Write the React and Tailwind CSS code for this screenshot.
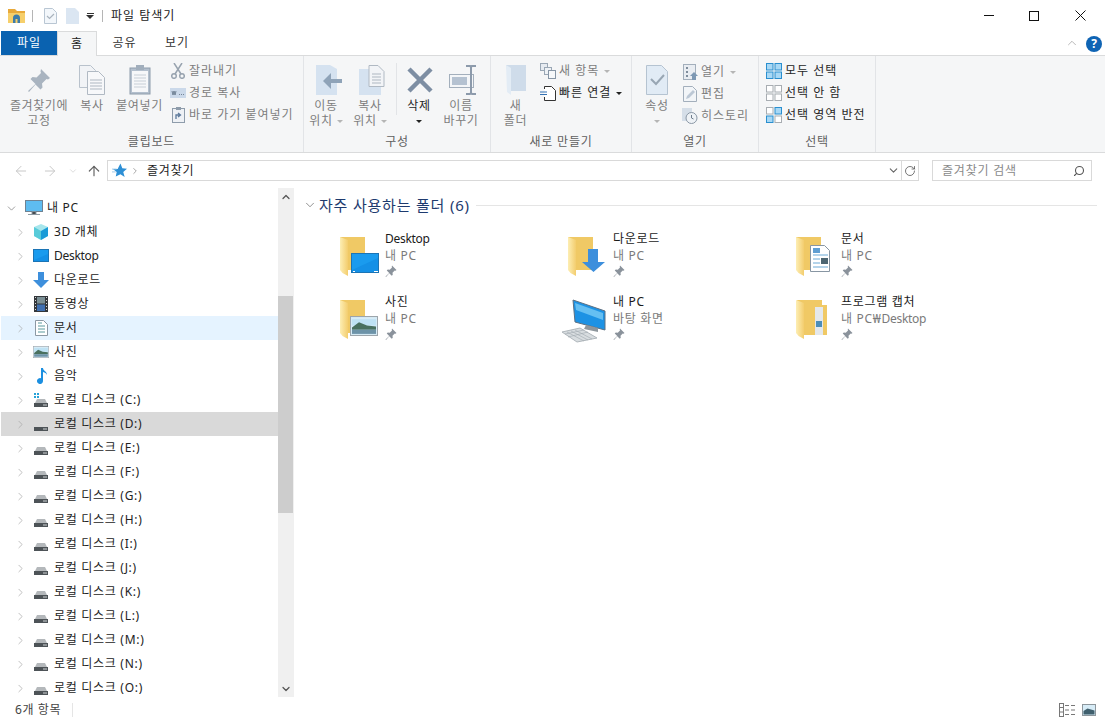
import React from 'react';
import { ArrowLeft, ArrowRight, ArrowUp, ChevronDown, ChevronRight, ChevronUp, RotateCw, Search } from 'lucide-react';

const Pin = ({ size = 12, color = '#8a929b' }) => (
  <svg width={size} height={size} viewBox="0 0 24 24">
    <path d="M14 1l9 9-2 1.500-1.500-.5-4.500 4.500.5 4-2 2-5-5-6.500 7.500L1 23l7.500-7-5-5 2-2 4 .5L14 5l-.5-1.500z" fill={color} />
  </svg>
);

// Desktop runs narrower than the hangul around it
const Txt = ({ children }) =>
  children.split(/(Desktop)/).map((part, i) =>
    part === 'Desktop' ? <span key={i} className="tracking-[-.3px]">{part}</span> : part
  );

const Caret = ({ dark, className = '' }) => (
  <span className={`inline-block h-0 w-0 border-x-[3px] border-t-[3px] border-x-transparent align-middle ${dark ? 'border-t-[#222]' : 'border-t-[#b5b5b5]'} ${className}`} />
);

const FolderShape = ({ children, tall }) => (
  <svg width="50" height="48" viewBox="0 0 50 48" className="shrink-0 overflow-visible">
    <defs>
      <linearGradient id="fold" x1="0" y1="0" x2="1" y2="0">
        <stop offset="0" stopColor="#fdeeb4" />
        <stop offset="1" stopColor="#f3cd6e" />
      </linearGradient>
    </defs>
    {tall ? <path d="M5 5h25v5h5v30H12z" fill="#f0c965" /> : <path d="M4 5h25v33H10z" fill="#f0c965" />}
    <path d="M4 5l8 3v36l-5.500-3L4 38z" fill="url(#fold)" />
    {children}
  </svg>
);

const DesktopOverlay = () => (
  <g>
    <rect x="15.500" y="21.500" width="27" height="19" fill="#1a9bee" stroke="#1b74b5" />
    <path d="M16 38l26-12v14H16z" fill="#1490e6" />
    <path d="M17 39.500h2M38 39.500h4" stroke="#fff" strokeWidth="1" />
  </g>
);

const DownloadOverlay = () => <path d="M24 17h10v13h7L29.500 40 18 30h6z" fill="#3d8fdc" />;

const DocOverlay = () => (
  <g>
    <path d="M18.500 13.500h14l5 5v21h-19z" fill="#fff" stroke="#8896a3" />
    <path d="M21 16h7v5h-7z" fill="#5f9ed2" />
    <path d="M21 23h15M21 27h7M21 31h7M21 35h15" stroke="#6aa9d6" />
    <path d="M29 26h7v6h-7z" fill="#4d6672" />
  </g>
);

const PhotoOverlay = ({ x = 14, y = 21, w = 28, h = 20 }) => (
  <svg x={x} y={y} width={w} height={h} viewBox="0 0 28 19" preserveAspectRatio="none">
    <rect x=".5" y=".5" width="27" height="18" fill="#d7ecf7" stroke="#9da5ab" />
    <path d="M2 3h24v6H2z" fill="#bfe2f4" />
    <path d="M2 11l7-5 8 3 9 1v3H2z" fill="#49705f" />
    <path d="M2 13h24v4H2z" fill="#6d93a8" />
  </svg>
);

const MyPcLarge = () => (
  <svg width="50" height="48" viewBox="0 0 50 48" className="shrink-0 overflow-visible">
    <path d="M9 5l32 11v19L11 27z" fill="#1d92e4" stroke="#5d7082" />
    <path d="M11 8l28 10v7L12 15z" fill="#65bff2" />
    <path d="M22 30l12 3v4l-14-3z" fill="#8f979d" />
    <path d="M-2 37l18-4 17 10-20 4z" fill="#d8dde0" stroke="#b0b7bc" />
    <path d="M3 37l17 9M7 36l17 9M11 35l17 9M1 39l19-4M4 42l20-5" stroke="#a0a8ae" strokeWidth=".6" />
  </svg>
);

const Drive = ({ win, dim }) => (
  <svg width="16" height="16" viewBox="0 0 16 16">
    {win && (
      <g fill="#27a2d8">
        <rect x="1" y="1" width="2" height="2" />
        <rect x="4" y="1" width="2" height="2" />
        <rect x="1" y="4" width="2" height="2" />
        <rect x="4" y="4" width="2" height="2" />
      </g>
    )}
    <path d="M2 11l2-4h8l2 4z" fill={dim ? '#d9d9d9' : '#b4b8bb'} />
    <rect x="1" y="11" width="14" height="4" fill="#4d5357" />
    <path d="M10 13h4" stroke="#cfd3d5" />
  </svg>
);

const navIcons = {
  pc: (
    <svg width="18" height="16" viewBox="0 0 18 16">
      <rect x=".5" y=".5" width="17" height="11" fill="#5ebcf0" stroke="#6f8292" />
      <path d="M7 12h4v2H7zM3 14.500h12" stroke="#8e9aa3" />
    </svg>
  ),
  cube: (
    <svg width="16" height="16" viewBox="0 0 16 16">
      <path d="M8 0l7 3v9l-7 4-7-4V3z" fill="#a7e6ec" />
      <path d="M8 7l7-4v9l-7 4z" fill="#1a9bd7" />
      <path d="M8 7L1 3v9l7 4z" fill="#58cbd9" />
    </svg>
  ),
  desktop: (
    <svg width="16" height="16" viewBox="0 0 16 16">
      <rect x=".5" y="1.500" width="15" height="12" fill="#1a9bee" stroke="#1b74b5" />
      <path d="M1 12l14-6v7H1z" fill="#1490e6" />
    </svg>
  ),
  down: (
    <svg width="16" height="16" viewBox="0 0 16 16">
      <path d="M5 0h6v8h5l-8 8-8-8h5z" fill="#3d8fdc" />
    </svg>
  ),
  video: (
    <svg width="14" height="16" viewBox="0 0 14 16">
      <rect width="14" height="16" fill="#33373b" />
      <rect x="3" y="1" width="8" height="6.500" fill="#7a8f95" />
      <rect x="3" y="8.500" width="8" height="6.500" fill="#3f6fb0" />
      <path d="M1 1.500h1M1 4.500h1M1 7.500h1M1 10.500h1M1 13.500h1M12 1.500h1M12 4.500h1M12 7.500h1M12 10.500h1M12 13.500h1" stroke="#d7d7d7" />
    </svg>
  ),
  doc: (
    <svg width="13" height="16" viewBox="0 0 13 16">
      <path d="M.5.500h8l4 4v11H.5z" fill="#fff" stroke="#8c98a3" />
      <path d="M3 3h4M3 6h7M3 9h7M3 12h7" stroke="#5a9a9e" />
    </svg>
  ),
  photo: (
    <svg width="16" height="12" viewBox="0 0 28 19" preserveAspectRatio="none">
      <PhotoOverlay x={0} y={0} w={28} h={19} />
    </svg>
  ),
  music: (
    <svg width="16" height="16" viewBox="0 0 16 16">
      <path d="M8 0h2c0 3 4 3 4 7-1-2-2-2.500-4-3v9a3 3 0 1 1-2-2.800z" fill="#1b8fe0" />
    </svg>
  ),
};

const drives = ['D', 'E', 'F', 'G', 'H', 'I', 'J', 'K', 'L', 'M', 'N', 'O'];

const NavRow = ({ icon, label, active, hover, top }) => (
  <div className={`flex h-6 w-[277px] items-center ${active ? 'bg-[#d9d9d9]' : hover ? 'bg-[#e5f3ff]' : ''}`}>
    {top ? (
      <ChevronDown size={13} strokeWidth={1.300} className="ml-[4px] text-[#777]" />
    ) : (
      <ChevronRight size={13} strokeWidth={1.300} className="ml-[13px] text-[#a6a6a6]" />
    )}
    <div className={`flex h-4 items-center justify-center ${top ? 'ml-[7px] w-[18px]' : 'ml-[6px] w-4'}`}>{icon}</div>
    <span className={`${top ? 'ml-[4px]' : 'ml-[5px]'} text-[12px] tracking-[.7px] text-[#222]`}><Txt>{label}</Txt></span>
  </div>
);

const Large = ({ w, icon, lines, drop, dark }) => (
  <div className={`flex shrink-0 flex-col items-center ${w}`}>
    <div className="flex h-[37px] items-center justify-center">{icon}</div>
    {lines.map((l, i) => (
      <div key={i} className={`h-[15px] whitespace-nowrap text-[12px] leading-[15px] tracking-[.6px] ${dark ? 'text-[#262626]' : 'text-[#7d7d7d]'}`}>
        {l}
        {drop && lines.length > 1 && i === lines.length - 1 && <Caret className="ml-[4px]" />}
      </div>
    ))}
    {drop && lines.length === 1 && (
      <div className="mt-[5px] flex h-[6px] items-center"><Caret dark={dark} /></div>
    )}
  </div>
);

const Small = ({ icon, label, dark, caret }) => (
  <div className="flex h-[22px] items-center whitespace-nowrap">
    <div className="flex h-4 w-4 items-center justify-center">{icon}</div>
    <span className={`ml-[3px] text-[12px] tracking-[1px] ${dark ? 'text-[#262626]' : 'text-[#7d7d7d]'}`}>{label}</span>
    {caret && <Caret dark={dark} className="ml-[5px]" />}
  </div>
);

const Group = ({ w, label, children }) => (
  <div className={`flex h-[96px] shrink-0 flex-col border-r border-[#e2e4e7] ${w}`}>
    <div className="flex h-[78px] pt-[5px]">{children}</div>
    <div className="text-center text-[12px] leading-[15px] tracking-[.8px] text-[#5f5f5f]">{label}</div>
  </div>
);

const SelIcon = ({ cells, border }) => (
  <svg width="16" height="16" viewBox="0 0 16 16">
    {[[0, 0], [8.500, 0], [0, 8.500], [8.500, 8.500]].map(([x, y], i) => (
      <rect key={i} x={x + .5} y={y + .5} width="6.500" height="6.500" fill={cells[i] ? '#a8d8f5' : '#fff'} stroke={border[i] ? '#2a8fcf' : '#a8adb2'} />
    ))}
  </svg>
);

const Item = ({ icon, name, sub }) => (
  <div className="flex h-[63px] w-[228px]">
    {icon}
    <div className="ml-[-1px]">
      <div className="mt-[-2px] h-[17px] whitespace-nowrap text-[12px] leading-[17px] tracking-[.7px] text-[#1a1a1a]"><Txt>{name}</Txt></div>
      <div className="h-[17px] whitespace-nowrap text-[12px] leading-[17px] tracking-[.7px] text-[#7a7a7a]"><Txt>{sub}</Txt></div>
      <div className="mt-[1px]">
        <Pin size={12} />
      </div>
    </div>
  </div>
);

const App = () => {
  return (
    <div className="h-[722px] w-[1105px] overflow-hidden bg-white font-['Noto_Sans','Noto_Sans_CJK_KR',sans-serif]">
      {/* title bar */}
      <div className="flex h-[31px] items-center">
        <svg width="17" height="15" viewBox="0 0 17 15" className="ml-[8px]">
          <path d="M0 1h7l2 2h8v4H0z" fill="#e8a93a" />
          <path d="M0 5h17v10H0z" fill="#f6cf6b" />
          <path d="M5 15v-5a3.500 3.500 0 0 1 7 0v5H9.500v-4h-2v4z" fill="#3d7cab" />
        </svg>
        <div className="ml-[7px] h-[12px] w-px bg-[#b5b5b5]" />
        <svg width="13" height="16" viewBox="0 0 13 16" className="ml-[11px]">
          <path d="M.5.500h8l4 4v11H.5z" fill="#f3f7fb" stroke="#b9c6d3" />
          <path d="M3 8l2.500 2.500L10 6" fill="none" stroke="#a9b3bd" strokeWidth="1.200" />
        </svg>
        <svg width="13" height="16" viewBox="0 0 13 16" className="ml-[9px]">
          <path d="M0 0h9l4 4v12H0z" fill="#dbe6f2" />
        </svg>
        <div className="ml-[7px] flex flex-col items-center">
          <div className="h-px w-[7px] bg-[#333]" />
          <div className="mt-px h-0 w-0 border-x-[4px] border-t-[4px] border-x-transparent border-t-[#333]" />
        </div>
        <div className="ml-[8px] h-[12px] w-px bg-[#b5b5b5]" />
        <span className="ml-[8px] text-[12px] tracking-[1px] text-[#1a1a1a]">파일 탐색기</span>
        <div className="flex-1" />
        <div className="h-px w-[10px] bg-[#111]" />
        <div className="ml-[35px] h-[10px] w-[10px] border border-[#111]" />
        <svg width="11" height="11" viewBox="0 0 11 11" className="ml-[36px] mr-[19px]">
          <path d="M.5.500l10 10M10.500.500l-10 10" stroke="#111" />
        </svg>
      </div>

      {/* tabs */}
      <div className="flex h-[25px] items-end border-b border-[#dadbdc]">
        <div className="ml-px flex h-[24px] w-[56px] items-center justify-center bg-[#0a62b0] text-[12px] tracking-[1px] text-white">파일</div>
        <div className="relative mb-[-1px] flex h-[25px] w-[40px] items-center justify-center border-x border-t border-[#dadbdc] bg-[#f5f6f7] text-[12px] tracking-[1px] text-[#222]">홈</div>
        <div className="flex h-[24px] w-[55px] items-center justify-center text-[12px] tracking-[1px] text-[#333]">공유</div>
        <div className="flex h-[24px] w-[50px] items-center justify-center text-[12px] tracking-[1px] text-[#333]">보기</div>
        <div className="flex-1" />
        <ChevronUp size={14} strokeWidth={1} className="mb-[5px] mr-[7px] text-[#888]" />
        <div className="mb-[3px] mr-[3px] flex h-4 w-4 items-center justify-center rounded-full bg-[#0f64b4] text-[12px] font-bold leading-none text-white">?</div>
      </div>

      {/* ribbon */}
      <div className="flex h-[97px] border-b border-[#dadbdc] bg-[#f5f6f7]">
        <Group w="w-[304px]" label="클립보드">
          <div className="w-[5px]" />
          <Large
            w="w-[68px]"
            lines={['즐겨찾기에', '고정']}
            icon={<Pin size={24} color="#a9b4c0" />}
          />
          <Large
            w="w-[38px]"
            lines={['복사']}
            icon={
              <svg width="26" height="30" viewBox="0 0 26 30">
                <path d="M.5.500h11l5 5v17H.5z" fill="#f1f3f6" stroke="#b9c2cc" />
                <path d="M8.500 6.500h11l6 6v17h-17z" fill="#f7f8fa" stroke="#b0b9c3" />
                <path d="M11 15h12M11 18h12M11 21h12M11 24h12" stroke="#aeb7c1" />
              </svg>
            }
          />
          <Large
            w="w-[57px]"
            lines={['붙여넣기']}
            icon={
              <svg width="22" height="30" viewBox="0 0 22 30">
                <rect x="1" y="3" width="20" height="26" fill="#b3bfcd" stroke="#8e9cab" />
                <rect x="3" y="6" width="16" height="21" fill="#f6f7f9" />
                <path d="M5 10h12M5 13h12M5 16h12M5 19h12M5 22h12" stroke="#c7ced6" />
                <rect x="7" y="0" width="8" height="5" fill="#a1aebc" />
              </svg>
            }
          />
          <div className="-mt-px ml-[2px] flex flex-col">
            <Small
              label="잘라내기"
              icon={
                <svg width="14" height="16" viewBox="0 0 14 16" fill="none" stroke="#98a3af" strokeWidth="1.500">
                  <path d="M3 0l7 11M11 0L4 11" />
                  <circle cx="3" cy="13" r="2.300" />
                  <circle cx="11" cy="13" r="2.300" />
                </svg>
              }
            />
            <Small
              label="경로 복사"
              icon={
                <svg width="16" height="10" viewBox="0 0 16 10">
                  <rect width="16" height="10" fill="#cbd9ea" />
                  <path d="M2 3l1 4 1-4 1 4 1-4M9 6.500h1M11 6.500h1M13 6.500h1" stroke="#5d6f83" strokeWidth=".8" fill="none" />
                </svg>
              }
            />
            <Small
              label="바로 가기 붙여넣기"
              icon={
                <svg width="13" height="16" viewBox="0 0 13 16">
                  <rect x=".5" y="1.500" width="12" height="14" fill="#eef1f5" stroke="#8e9cab" />
                  <rect x="4" y="0" width="5" height="3" fill="#8e9cab" />
                  <path d="M4 12V8h4M6 6l2.500 2L6 10" fill="none" stroke="#5d7a9c" strokeWidth="1.300" />
                </svg>
              }
            />
          </div>
        </Group>

        <Group w="w-[187px]" label="구성">
          <Large
            w="w-[44px]"
            lines={['이동', '위치']}
            drop
            icon={
              <svg width="26" height="30" viewBox="0 0 26 30" className="ml-[5px]">
                <path d="M0 0h14l7 4v26H0z" fill="#d5e2f0" />
                <path d="M26 14H15V8L7 16l8 8v-6h11z" fill="#8fa3b8" />
              </svg>
            }
          />
          <Large
            w="w-[44px]"
            lines={['복사', '위치']}
            drop
            icon={
              <svg width="26" height="30" viewBox="0 0 26 30" className="ml-[3px]">
                <path d="M0 4h22v26H0z" fill="#d5e2f0" />
                <path d="M10 .500h9l6 6v15H10z" fill="#f2f4f7" stroke="#b0b9c3" />
                <path d="M13 9h9M13 12h9M13 15h9M13 18h9" stroke="#aeb7c1" />
              </svg>
            }
          />
          <div className="ml-[4px] mt-[2px] h-[52px] w-px bg-[#e2e4e7]" />
          <Large
            w="w-[44px]"
            dark
            drop
            lines={['삭제']}
            icon={
              <svg width="26" height="26" viewBox="0 0 26 26" className="ml-[2px]">
                <path d="M2 2l22 22M24 2L2 24" stroke="#7d8ea3" strokeWidth="4.500" />
              </svg>
            }
          />
          <Large
            w="w-[40px]"
            lines={['이름', '바꾸기']}
            icon={
              <svg width="28" height="30" viewBox="0 0 28 30" className="ml-[3px]">
                <rect x=".5" y="9.500" width="24" height="13" fill="#f4f6f8" stroke="#a3afbc" />
                <rect x="3" y="12" width="15" height="8" fill="#b5c2d1" />
                <path d="M17 1h4l1 1 1-1h4M22 2v26M17 29h4l1-1 1 1h4" fill="none" stroke="#8c9aab" strokeWidth="2" />
              </svg>
            }
          />
        </Group>

        <Group w="w-[141px]" label="새로 만들기">
          <Large
            w="w-[49px]"
            lines={['새', '폴더']}
            icon={
              <svg width="20" height="30" viewBox="0 0 20 30">
                <path d="M0 0h20v26H5z" fill="#cfdcea" />
                <path d="M0 0l5 3v27l-4-3z" fill="#e3ecf5" />
              </svg>
            }
          />
          <div className="-mt-px flex flex-col">
            <Small
              label="새 항목"
              caret
              icon={
                <svg width="16" height="16" viewBox="0 0 16 16">
                  <rect x=".5" y=".5" width="7" height="7" fill="#e6ebf1" stroke="#9aa7b5" />
                  <rect x="4.500" y="4.500" width="7" height="7" fill="#eef2f6" stroke="#9aa7b5" />
                  <rect x="8.500" y="7.500" width="7" height="8" fill="#f6f8fa" stroke="#8796a6" />
                </svg>
              }
            />
            <Small
              label="빠른 연결"
              caret
              dark
              icon={
                <svg width="16" height="15" viewBox="0 0 16 15" fill="none">
                  <path d="M4.500 3V.500h7l4 4v10h-11V11" fill="#fff" stroke="#333" />
                  <path d="M0 6h7M0 8.500h7" stroke="#3573b5" />
                </svg>
              }
            />
          </div>
        </Group>

        <Group w="w-[127px]" label="열기">
          <Large
            w="w-[50px]"
            lines={['속성']}
            drop
            icon={
              <svg width="22" height="30" viewBox="0 0 22 30">
                <path d="M.5.500h15l6 6v23H.5z" fill="#e1ebf5" stroke="#b5c3d1" />
                <path d="M5 14l5 5 8-9" fill="none" stroke="#98a6b3" strokeWidth="2" />
              </svg>
            }
          />
          <div className="flex flex-col">
            <Small
              label="열기"
              caret
              icon={
                <svg width="15" height="16" viewBox="0 0 15 16">
                  <rect x=".5" y=".5" width="12" height="15" fill="#e9edf2" stroke="#a3afbc" />
                  <path d="M3 3h2v2H3zM3 7h2v2H3zM3 11h2v2H3z" fill="#7f8d9c" />
                  <path d="M11 8l4 4h-2v4h-4v-4H7z" fill="#7d98b3" />
                </svg>
              }
            />
            <Small
              label="편집"
              icon={
                <svg width="14" height="16" viewBox="0 0 14 16">
                  <path d="M.5.500h9l4 4v11H.5z" fill="#f2f5f8" stroke="#a3afbc" />
                  <path d="M3 13l1-3 6-6 2 2-6 6z" fill="#bcc8d5" />
                </svg>
              }
            />
            <Small
              label="히스토리"
              icon={
                <svg width="16" height="16" viewBox="0 0 16 16">
                  <rect width="10" height="13" fill="#d5dee8" />
                  <circle cx="9.500" cy="10" r="5.500" fill="#eef2f6" stroke="#8a97a5" />
                  <path d="M9.500 7v3l2 1" fill="none" stroke="#6f7d8c" />
                </svg>
              }
            />
          </div>
        </Group>

        <Group w="w-[117px]" label="선택">
          <div className="-mt-px ml-[7px] flex flex-col">
            <Small dark label="모두 선택" icon={<SelIcon cells={[1, 1, 1, 1]} border={[1, 1, 1, 1]} />} />
            <Small dark label="선택 안 함" icon={<SelIcon cells={[0, 0, 0, 0]} border={[0, 0, 0, 0]} />} />
            <Small dark label="선택 영역 반전" icon={<SelIcon cells={[0, 1, 1, 0]} border={[0, 1, 1, 0]} />} />
          </div>
        </Group>
      </div>

      {/* address bar */}
      <div className="flex h-[35px] items-center">
        <ArrowLeft size={16} strokeWidth={1.500} className="ml-[13px] text-[#c8c8c8]" />
        <ArrowRight size={16} strokeWidth={1.500} className="ml-[13px] text-[#c8c8c8]" />
        <ChevronDown size={10} strokeWidth={1.500} className="ml-[10px] text-[#c8c8c8]" />
        <ArrowUp size={16} strokeWidth={1.800} className="ml-[8px] text-[#666]" />
        <div className="ml-[5px] flex h-[21px] w-[812px] items-center border border-[#d9d9d9]">
          <svg width="15" height="15" viewBox="0 0 16 15" className="ml-[4px]">
            <path d="M9 0l2 5 5 .5-4 3.500 1.500 5.500L9 11.500 4 14l1-5-4-3h5z" fill="#2d8fd5" />
            <path d="M0 6h5M0 9h4" stroke="#9ac6e6" />
          </svg>
          <ChevronRight size={10} strokeWidth={1.800} className="ml-[3px] text-[#8a8a8a]" />
          <span className="ml-[7px] text-[12px] tracking-[.8px] text-[#222]">즐겨찾기</span>
          <div className="flex-1" />
          <ChevronDown size={13} strokeWidth={2} className="mr-[1px] text-[#666]" />
          <div className="flex h-full w-[17px] items-center justify-center border-l border-[#d9d9d9]">
            <RotateCw size={12} strokeWidth={1.600} className="text-[#555]" />
          </div>
        </div>
        <div className="ml-[13px] flex h-[21px] w-[160px] items-center border border-[#d9d9d9]">
          <span className="ml-[9px] text-[12px] tracking-[.8px] text-[#8a8a8a]">즐겨찾기 검색</span>
          <div className="flex-1" />
          <Search size={12} strokeWidth={2.200} className="mr-[6px] -scale-x-100 text-[#555]" />
        </div>
      </div>

      {/* main */}
      <div className="flex h-[509px]">
        <div className="h-full w-[278px] shrink-0 overflow-hidden pl-px pt-[8px]">
          <NavRow top icon={navIcons.pc} label="내 PC" />
          <NavRow icon={navIcons.cube} label="3D 개체" />
          <NavRow icon={navIcons.desktop} label="Desktop" />
          <NavRow icon={navIcons.down} label="다운로드" />
          <NavRow icon={navIcons.video} label="동영상" />
          <NavRow hover icon={navIcons.doc} label="문서" />
          <NavRow icon={navIcons.photo} label="사진" />
          <NavRow icon={navIcons.music} label="음악" />
          <NavRow icon={<Drive win />} label="로컬 디스크 (C:)" />
          {drives.map((d) => (
            <NavRow key={d} active={d === 'D'} icon={<Drive dim={d === 'D'} />} label={`로컬 디스크 (${d}:)`} />
          ))}
        </div>
        <div className="flex h-full w-[16px] shrink-0 flex-col bg-[#f0f0f0]">
          <div className="flex h-[17px] items-center justify-center">
            <ChevronUp size={12} strokeWidth={2.500} className="text-[#555]" />
          </div>
          <div className="h-[91px]" />
          <div className="h-[217px] w-[15px] bg-[#cdcdcd]" />
          <div className="flex-1" />
          <div className="flex h-[17px] items-center justify-center">
            <ChevronDown size={12} strokeWidth={2.500} className="text-[#555]" />
          </div>
        </div>

        <div className="min-w-0 flex-1 pl-[9px] pr-[8px]">
          <div className="mt-[7px] flex h-[20px] items-center">
            <ChevronDown size={14} strokeWidth={1} className="text-[#444]" />
            <span className="ml-[2px] whitespace-nowrap text-[15px] tracking-[.8px] text-[#1e3a6e]">자주 사용하는 폴더 (6)</span>
            <div className="ml-[6px] h-px flex-1 bg-[#e5e5e5]" />
          </div>
          <div className="ml-[33px] mt-[17px] grid grid-cols-[228px_228px_228px]">
            <Item name="Desktop" sub="내 PC" icon={<FolderShape><DesktopOverlay /></FolderShape>} />
            <Item name="다운로드" sub="내 PC" icon={<FolderShape><DownloadOverlay /></FolderShape>} />
            <Item name="문서" sub="내 PC" icon={<FolderShape><DocOverlay /></FolderShape>} />
            <Item name="사진" sub="내 PC" icon={<FolderShape><PhotoOverlay /></FolderShape>} />
            <Item name="내 PC" sub="바탕 화면" icon={<MyPcLarge />} />
            <Item name="프로그램 캡처" sub="내 PC₩Desktop" icon={<FolderShape tall><path d="M23 12h8v28h-8z" fill="#e4e8ec" /><path d="M24 26h6v6h-6z" fill="#4c8db8" /></FolderShape>} />
          </div>
        </div>
      </div>

      {/* status bar */}
      <div className="flex h-[25px] items-center">
        <span className="ml-[15px] text-[12px] tracking-[.6px] text-[#444]">6개 항목</span>
        <div className="ml-[11px] h-[14px] w-px bg-[#e5e5e5]" />
        <div className="flex-1" />
        <svg width="16" height="14" viewBox="0 0 16 14" className="mr-[7px]">
          <rect x=".5" y=".5" width="4" height="13" fill="#fff" stroke="#777" />
          <path d="M1 4.500h3M1 9h3" stroke="#777" />
          <path d="M6 2.500h4M12 2.500h4M6 7h4M12 7h4M6 11.500h4M12 11.500h4" stroke="#777" />
        </svg>
        <svg width="14" height="12" viewBox="0 0 28 24" className="mr-[9px]">
          <rect x="1" y="1" width="26" height="22" fill="#d7ecf7" stroke="#8d969c" strokeWidth="2" />
          <path d="M3 14l8-5 14 4v8H3z" fill="#3f5f6d" />
        </svg>
      </div>
    </div>
  );
};

export default App;
